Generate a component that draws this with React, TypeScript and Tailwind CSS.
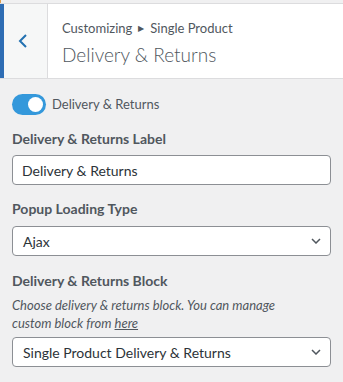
import React, { useState } from 'react';

const font = { fontFamily: 'Lato, "Noto Sans", sans-serif' };

const Chevron = () => (
  <svg width="10" height="6" viewBox="0 0 10 6" className="text-[#50575e]">
    <path d="M1 1l4 4 4-4" fill="none" stroke="currentColor" strokeWidth="1.5" />
  </svg>
);

const SelectBox: React.FC<{ value: string }> = ({ value }) => (
  <div className="flex h-[30px] items-center justify-between rounded-[4px] border border-[#8c8f94] bg-white pl-[10px] pr-[9px] text-[14px] text-[#2c3338]">
    <span>{value}</span>
    <Chevron />
  </div>
);

const App: React.FC = () => {
  const [enabled, setEnabled] = useState(true);

  return (
    <div className="h-[382px] w-[343px] overflow-hidden bg-[#f0f0f1]" style={font}>
      {/* top strip */}
      <div className="flex h-[4px] border-b border-[#dcdcde]">
        <div className="w-[1px] bg-[#e0a050]" />
      </div>

      {/* header */}
      <div className="flex h-[75px] border-b border-[#dcdcde] bg-white">
        <div className="w-[4px] bg-[#2e6db4]" />
        <button className="flex w-[44px] items-center justify-center border-r border-[#dcdcde] bg-[#f6f7f7] pr-[6px] text-[#2271b1]">
          <svg width="10" height="14" viewBox="0 0 10 14">
            <path d="M8 1L2 7l6 6" fill="none" stroke="currentColor" strokeWidth="2" />
          </svg>
        </button>
        <div className="flex flex-col pl-[14px] pt-[15px] text-[#50575e]">
          <div className="flex items-center text-[13px] leading-[18px]">
            <span>Customizing</span>
            <span className="mx-[6px] text-[8px]">▶</span>
            <span>Single Product</span>
          </div>
          <div className="mt-[5px] text-[19px] font-light leading-[26px]">Delivery &amp; Returns</div>
        </div>
      </div>

      {/* body */}
      <div className="px-[12px] pt-[15px]">
        <label className="flex items-center gap-[6px]">
          <button
            onClick={() => setEnabled(!enabled)}
            className={`relative h-[21px] w-[34px] rounded-full ${enabled ? 'bg-[#3498db]' : 'bg-[#c3c4c7]'}`}
          >
            <span
              className={`absolute top-[3px] h-[15px] w-[15px] rounded-full bg-white ${enabled ? 'left-[16px]' : 'left-[3px]'}`}
            />
          </button>
          <span className="text-[13px] text-[#50575e]">Delivery &amp; Returns</span>
        </label>

        <div className="mt-[14px] text-[14px] font-bold leading-[20px] text-[#50575e]">Delivery &amp; Returns Label</div>
        <div className="mt-[6px] flex h-[30px] items-center rounded-[4px] border border-[#8c8f94] bg-white px-[9px] text-[14px] text-[#2c3338]">
          Delivery &amp; Returns
        </div>

        <div className="mt-[14px] text-[14px] font-bold leading-[20px] text-[#50575e]">Popup Loading Type</div>
        <div className="mt-[7px]">
          <SelectBox value="Ajax" />
        </div>

        <div className="mt-[15px] text-[14px] font-bold leading-[20px] text-[#50575e]">Delivery &amp; Returns Block</div>
        <p className="mt-[5px] max-w-[285px] text-[13px] italic leading-[18px] text-[#50575e]">
          Choose delivery &amp; returns block. You can manage custom block from{' '}
          <a href="#" className="underline">here</a>
        </p>
        <div className="mt-[5px]">
          <SelectBox value="Single Product Delivery & Returns" />
        </div>
      </div>
    </div>
  );
};

export default App;
